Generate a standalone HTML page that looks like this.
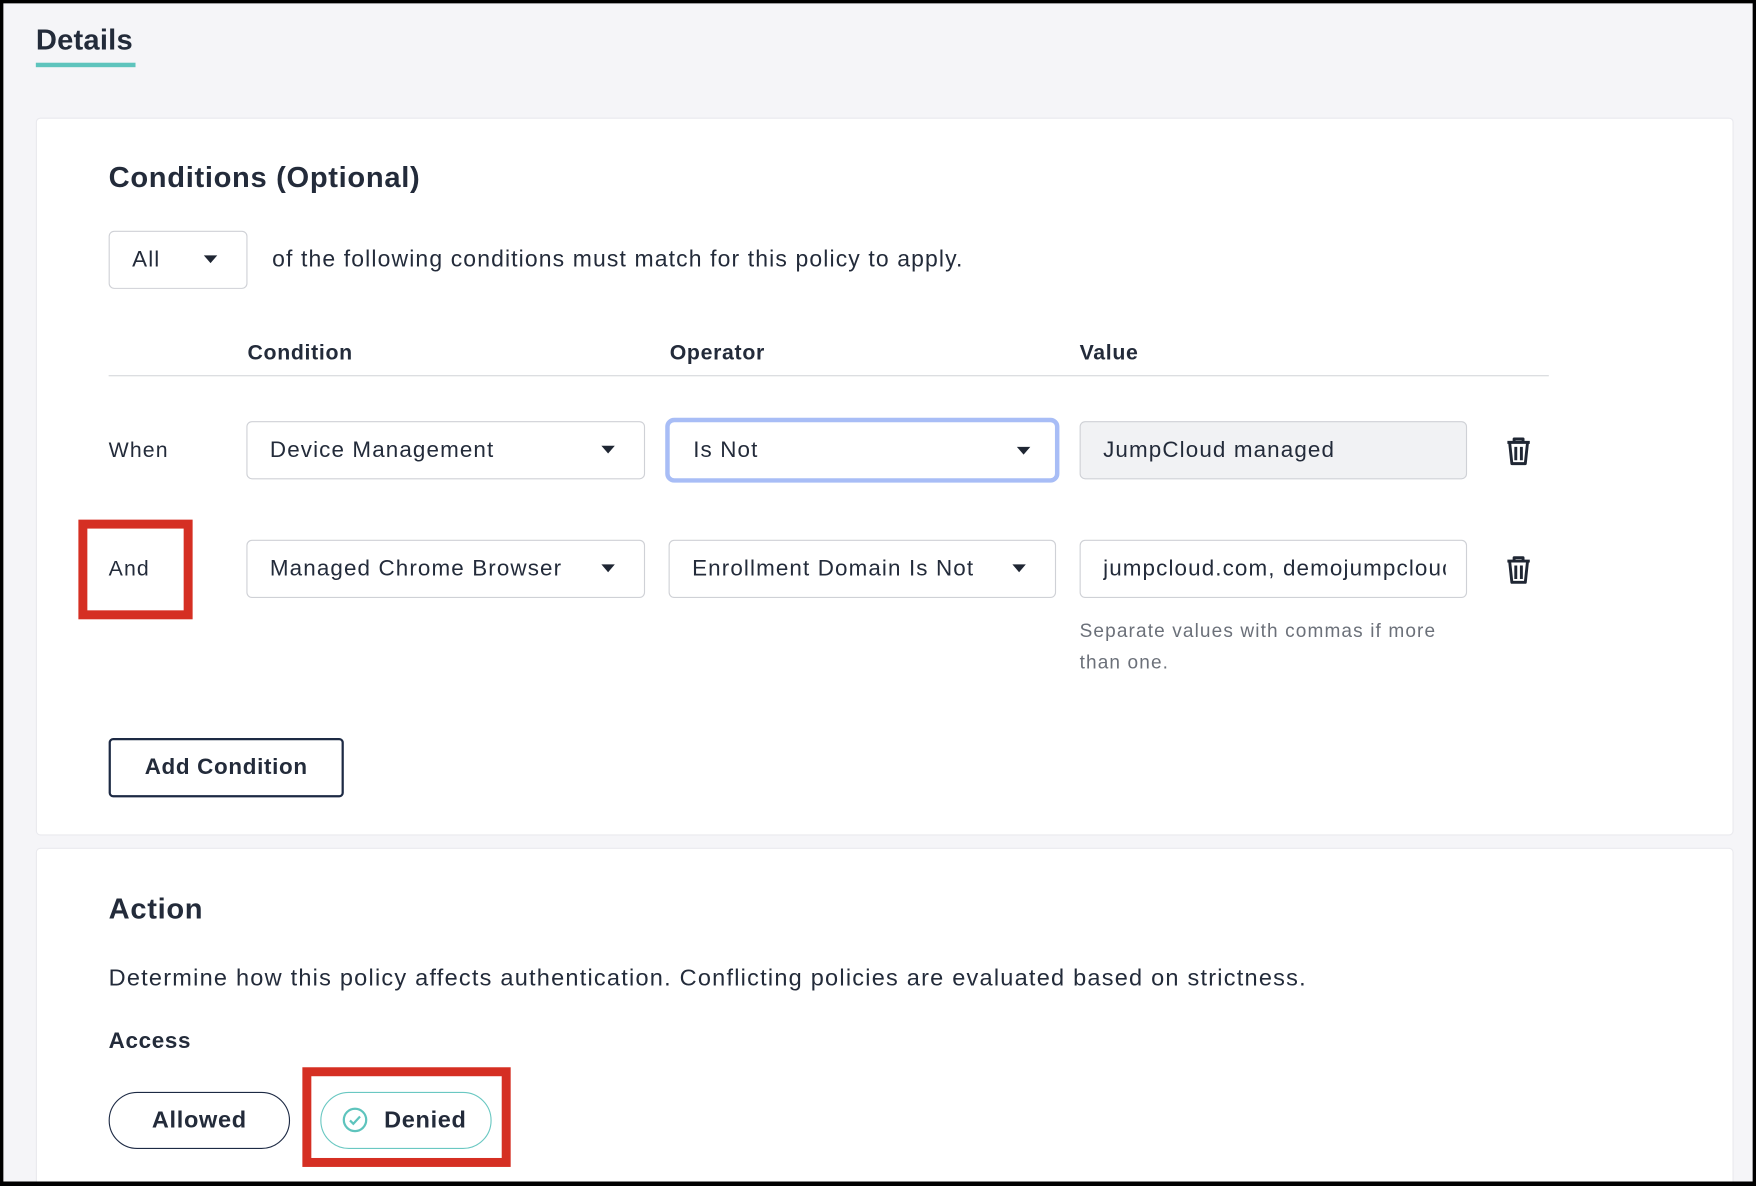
<!DOCTYPE html>
<html><head><meta charset="utf-8"><style>
*{box-sizing:border-box;margin:0;padding:0}
html,body{width:1756px;height:1186px;overflow:hidden;background:#000}
#w{position:absolute;left:0;top:0;width:1568px;height:1059px;transform:scale(1.1199);transform-origin:0 0;background:#000;font-family:"Liberation Sans",sans-serif;color:#232b3a;letter-spacing:1px}
#bg{position:absolute;left:3px;top:3px;right:3px;bottom:4px;background:#f5f5f8;overflow:hidden}
.a{position:absolute;white-space:nowrap}
.card{position:absolute;left:29px;width:1516px;background:#fff;border:1px solid #e9e9ee;border-radius:4px}
.sel{position:absolute;height:52px;border:1px solid #cfd1d6;border-radius:5px;background:#fff;font-size:20px;line-height:50px;padding-left:20px;white-space:nowrap;overflow:hidden}
.car{position:absolute;right:26px;top:21px;width:0;height:0;border-left:6px solid transparent;border-right:6px solid transparent;border-top:7px solid #1f2633}
.red{position:absolute;border:8px solid #d52f23}
.h{font-weight:bold;letter-spacing:0.6px}
</style></head><body><div id="w"><div id="bg">
<div class="a h" style="left:29px;top:17px;font-size:26px;letter-spacing:0.2px">Details</div>
<div class="a" style="left:29px;top:53px;width:89px;height:4px;background:#5ec4bd"></div>

<div class="card" style="top:102px;height:641px"></div>
<div class="a h" style="left:94px;top:140px;font-size:26px">Conditions (Optional)</div>
<div class="sel" style="left:94px;top:203px;width:124px">All<div class="car"></div></div>
<div class="a" style="left:240px;top:217px;font-size:20.5px">of the following conditions must match for this policy to apply.</div>
<div class="a h" style="left:218px;top:302px;font-size:19px">Condition</div>
<div class="a h" style="left:595px;top:302px;font-size:19px">Operator</div>
<div class="a h" style="left:961px;top:302px;font-size:19px">Value</div>
<div class="a" style="left:94px;top:332px;width:1286px;height:1px;background:#d6d7db"></div>

<div class="a" style="left:94px;top:389px;font-size:19px">When</div>
<div class="sel" style="left:217px;top:373px;width:356px">Device Management<div class="car"></div></div>
<div class="sel" style="left:591px;top:370px;width:352px;height:58px;border:4px solid #a8bdf6;border-radius:8px;line-height:50px;padding-left:21px">Is Not<div class="car" style="right:22px;top:22px"></div></div>
<div class="sel" style="left:961px;top:373px;width:346px;background:#f1f2f4">JumpCloud managed</div>
<svg class="a" style="left:1340px;top:386px" width="26" height="28" viewBox="0 0 26 28"><path d="M3 6H23M9 6V3H17V6M5 6L7 25H19L21 6M10.5 10V22M15.5 10V22" fill="none" stroke="#1f2633" stroke-width="2.6" stroke-linejoin="round"/></svg>

<div class="a" style="left:94px;top:495px;font-size:19px">And</div>
<div class="red" style="left:67px;top:461px;width:102px;height:89px"></div>
<div class="sel" style="left:217px;top:479px;width:356px">Managed Chrome Browser<div class="car"></div></div>
<div class="sel" style="left:594px;top:479px;width:346px">Enrollment Domain Is Not<div class="car"></div></div>
<div class="sel" style="left:961px;top:479px;width:346px"><div style="width:306px;overflow:hidden">jumpcloud.com, demojumpcloud.com</div></div>
<svg class="a" style="left:1340px;top:492px" width="26" height="28" viewBox="0 0 26 28"><path d="M3 6H23M9 6V3H17V6M5 6L7 25H19L21 6M10.5 10V22M15.5 10V22" fill="none" stroke="#1f2633" stroke-width="2.6" stroke-linejoin="round"/></svg>
<div class="a" style="left:961px;top:547px;font-size:17px;line-height:28px;color:#6b7079;white-space:normal;width:345px">Separate values with commas if more than one.</div>

<div class="a h" style="left:94px;top:656px;width:210px;height:53px;border:2px solid #1d2a44;border-radius:4px;font-size:20px;text-align:center;line-height:49px">Add Condition</div>

<div class="card" style="top:754px;height:320px"></div>
<div class="a h" style="left:94px;top:793px;font-size:26px">Action</div>
<div class="a" style="left:94px;top:859px;font-size:21px;letter-spacing:1.1px">Determine how this policy affects authentication. Conflicting policies are evaluated based on strictness.</div>
<div class="a h" style="left:94px;top:916px;font-size:20px">Access</div>
<div class="a h" style="left:94px;top:972px;width:162px;height:51px;border:1px solid #1d2a44;border-radius:26px;font-size:21px;text-align:center;line-height:49px">Allowed</div>
<div class="a h" style="left:283px;top:972px;width:153px;height:51px;border:1px solid #6ac8c2;border-radius:26px;font-size:21px;line-height:49px;padding-left:56px">Denied</div>
<svg class="a" style="left:302px;top:985px" width="24" height="24" viewBox="0 0 24 24"><circle cx="12" cy="12" r="10" fill="none" stroke="#5ec4bd" stroke-width="2"/><path d="M7.5 12.5L10.5 15.5L16.5 9" fill="none" stroke="#5ec4bd" stroke-width="2"/></svg>
<div class="red" style="left:267px;top:950px;width:186px;height:89px"></div>
</div></div></body></html>
